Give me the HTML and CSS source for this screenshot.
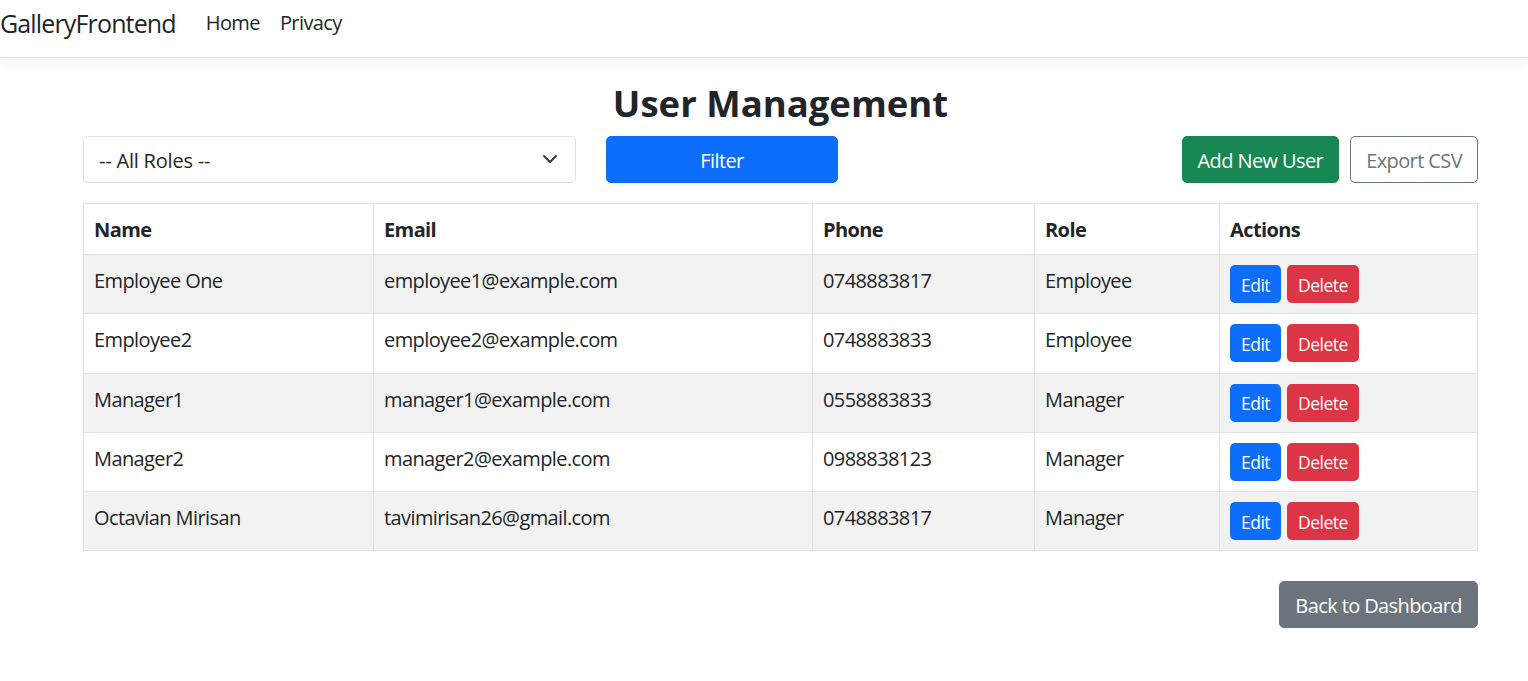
FILE: index.html
```html
<!DOCTYPE html>
<html lang="en">
<head>
<meta charset="utf-8">
<title>User Management - GalleryFrontend</title>
<link rel="stylesheet" href="styles.css">
</head>
<body>
<header class="navbar">
  <a class="brand" href="#">GalleryFrontend</a>
  <nav class="nav-links">
    <a class="nav-link" href="#">Home</a>
    <a class="nav-link" href="#">Privacy</a>
  </nav>
</header>
<main class="container">
  <h3 class="page-title">User Management</h3>
  <div class="toolbar">
    <div class="select-wrap">
      <select class="form-select">
        <option>-- All Roles --</option>
        <option>Employee</option>
        <option>Manager</option>
      </select>
      <svg class="chevron" viewBox="0 0 16 16" width="16" height="16"><path d="M2 5l6 6 6-6" fill="none" stroke="#343a40" stroke-width="2" stroke-linecap="round" stroke-linejoin="round"/></svg>
    </div>
    <button class="btn btn-primary btn-filter">Filter</button>
    <div class="toolbar-right">
      <button class="btn btn-success">Add New User</button>
      <button class="btn btn-outline">Export CSV</button>
    </div>
  </div>
  <table class="users">
    <colgroup>
      <col class="c-name"><col class="c-email"><col class="c-phone"><col class="c-role"><col class="c-actions">
    </colgroup>
    <thead>
      <tr><th>Name</th><th>Email</th><th>Phone</th><th>Role</th><th>Actions</th></tr>
    </thead>
    <tbody>
      <tr><td>Employee One</td><td>employee1@example.com</td><td>0748883817</td><td>Employee</td><td><div class="actions"><button class="btn-sm btn-primary">Edit</button><button class="btn-sm btn-danger">Delete</button></div></td></tr>
      <tr><td>Employee2</td><td>employee2@example.com</td><td>0748883833</td><td>Employee</td><td><div class="actions"><button class="btn-sm btn-primary">Edit</button><button class="btn-sm btn-danger">Delete</button></div></td></tr>
      <tr><td>Manager1</td><td>manager1@example.com</td><td>0558883833</td><td>Manager</td><td><div class="actions"><button class="btn-sm btn-primary">Edit</button><button class="btn-sm btn-danger">Delete</button></div></td></tr>
      <tr><td>Manager2</td><td>manager2@example.com</td><td>0988838123</td><td>Manager</td><td><div class="actions"><button class="btn-sm btn-primary">Edit</button><button class="btn-sm btn-danger">Delete</button></div></td></tr>
      <tr><td>Octavian Mirisan</td><td>tavimirisan26@gmail.com</td><td>0748883817</td><td>Manager</td><td><div class="actions"><button class="btn-sm btn-primary">Edit</button><button class="btn-sm btn-danger">Delete</button></div></td></tr>
    </tbody>
  </table>
  <div class="footer-actions">
    <button class="btn btn-secondary">Back to Dashboard</button>
  </div>
</main>
</body>
</html>
```

FILE: styles.css
```css
* { box-sizing: border-box; }

html, body {
  margin: 0;
  background: #fff;
}

body {
  font-family: "Open Sans", "Noto Sans", "Liberation Sans", sans-serif;
  font-size: 20px;
  line-height: 30px;
  color: #212529;
  letter-spacing: -0.6px;
}

.navbar {
  display: flex;
  align-items: center;
  height: 58px;
  border-bottom: 1px solid #dfe2e5;
  box-shadow: 0 5px 15px rgba(0, 0, 0, 0.05);
}

.brand {
  font-size: 25px;
  line-height: 36px;
  letter-spacing: -0.85px;
  color: #212529;
  text-decoration: none;
  margin-right: 20px;
  margin-top: -12px;
}

.nav-links {
  display: flex;
  margin-top: -12px;
}

.nav-link {
  padding: 0 10px;
  color: #212529;
  text-decoration: none;
  font-size: 20px;
}

.container {
  padding: 24px 50px 40px 83px;
}

.page-title {
  margin: 0 0 12px 0;
  text-align: center;
  font-size: 36.5px;
  line-height: 42px;
  font-weight: 700;
  letter-spacing: 0;
}

.toolbar {
  display: flex;
  align-items: center;
  margin-bottom: 20px;
}

.select-wrap {
  position: relative;
  width: 493px;
}

.form-select {
  width: 100%;
  height: 47px;
  border: 1px solid #dee2e6;
  border-radius: 5px;
  padding: 2px 60px 0 15px;
  font: inherit;
  letter-spacing: -0.2px;
  color: #212529;
  background: #fff;
  appearance: none;
  -webkit-appearance: none;
}

.chevron {
  position: absolute;
  right: 18px;
  top: 15px;
  pointer-events: none;
}

.btn {
  height: 47px;
  padding: 2px 15px 0;
  border-radius: 5px;
  border: 1px solid transparent;
  font: inherit;
  letter-spacing: -0.6px;
  cursor: pointer;
}

.btn-filter {
  width: 232px;
  margin-left: 30px;
}

.btn-primary { background: #0d6efd; border-color: #0d6efd; color: #fff; }
.btn-success { background: #198754; border-color: #198754; color: #fff; }
.btn-danger { background: #dc3545; border-color: #dc3545; color: #fff; }
.btn-secondary { background: #6c757d; border-color: #6c757d; color: #fff; }
.btn-outline { background: #fff; border-color: #6c757d; color: #6c757d; }

.toolbar-right {
  margin-left: auto;
  display: flex;
  gap: 11px;
}

.users {
  width: 100%;
  border-collapse: collapse;
  border: 1px solid #dee2e6;
}

.c-name { width: 290px; }
.c-email { width: 439px; }
.c-phone { width: 222px; }
.c-role { width: 185px; }
.c-actions { width: 258px; }

.users th,
.users td {
  border: 1px solid #dee2e6;
  padding: 11px 10px 9px;
  text-align: left;
  vertical-align: top;
}

.users th {
  font-weight: 700;
  height: 51px;
}

.users td {
  height: 59.25px;
}

.users td:last-child {
  padding-top: 10px;
  padding-bottom: 10px;
}

.users tbody tr:nth-child(odd) td {
  background: #f2f2f2;
}

.actions {
  display: flex;
  gap: 6px;
}

.btn-sm {
  height: 38px;
  padding: 1px 10px 0;
  border-radius: 5px;
  border: 1px solid transparent;
  font-family: inherit;
  font-size: 17.5px;
  letter-spacing: -0.5px;
  cursor: pointer;
}

.footer-actions {
  display: flex;
  justify-content: flex-end;
  margin-top: 30px;
}
```
